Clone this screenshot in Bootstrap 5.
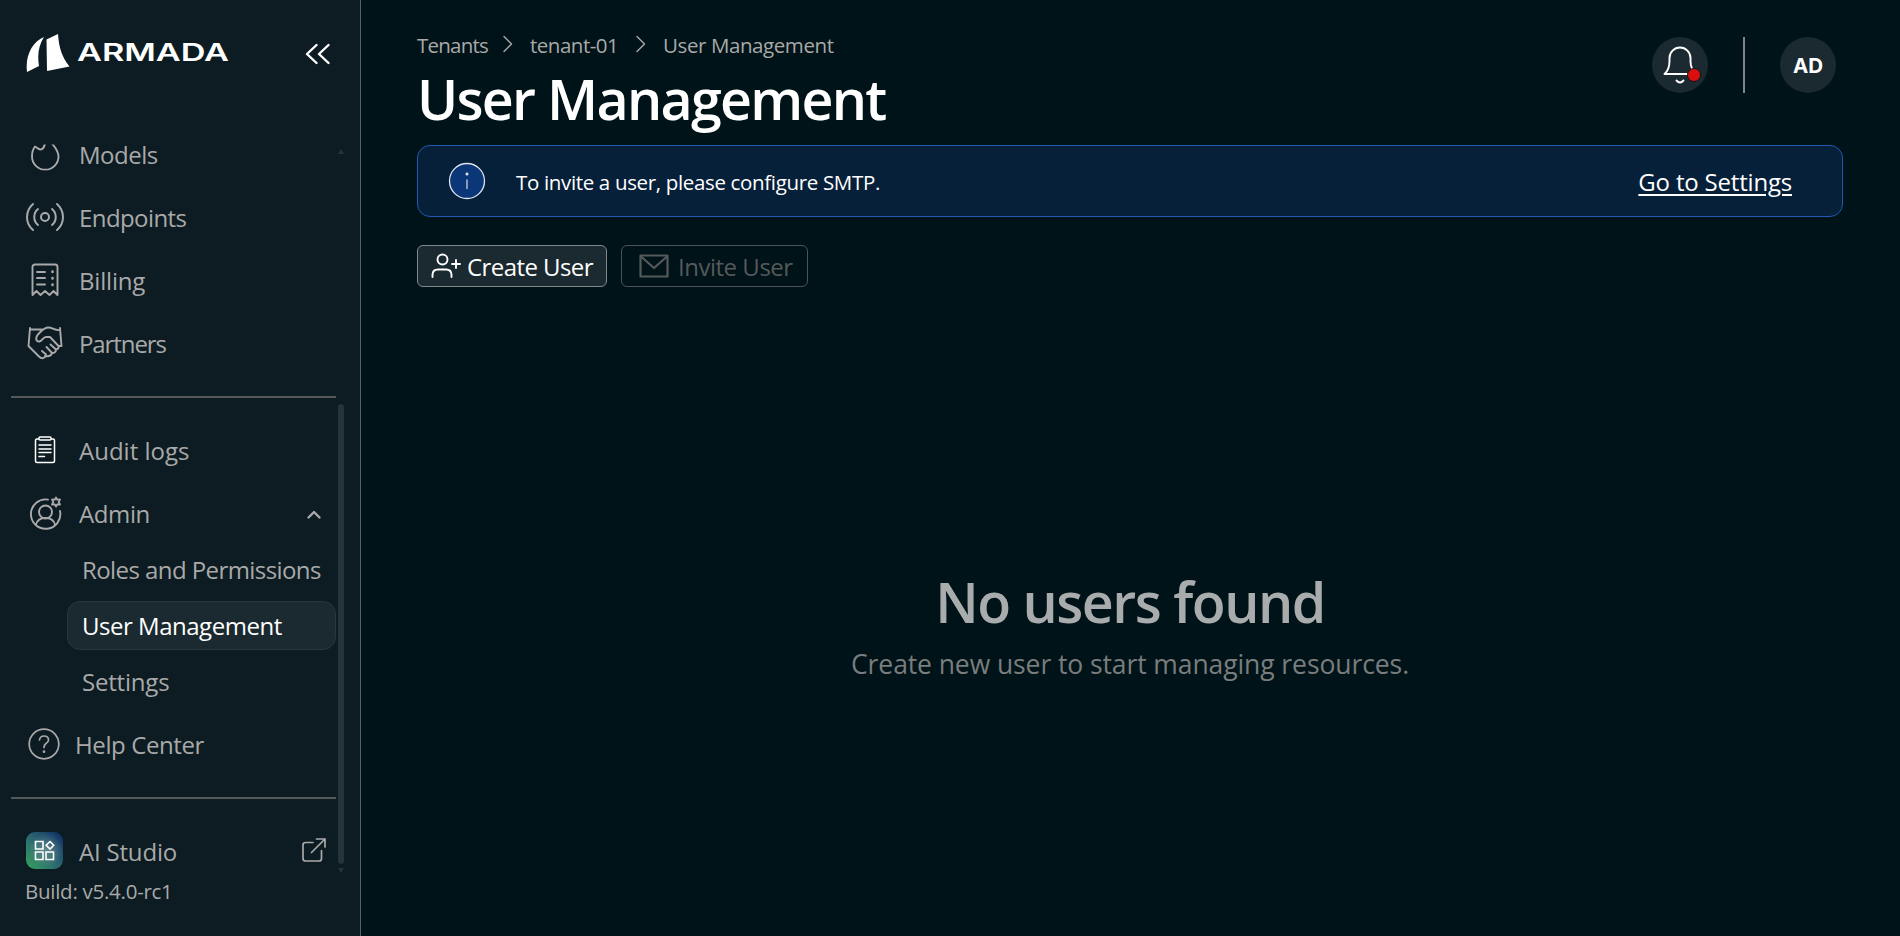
<!DOCTYPE html>
<html lang="en" data-bs-theme="dark">
<head>
<meta charset="utf-8">
<title>User Management</title>
<link href="https://cdn.jsdelivr.net/npm/bootstrap@5.3.0/dist/css/bootstrap.min.css" rel="stylesheet">
<script src="https://cdn.jsdelivr.net/npm/bootstrap@5.3.0/dist/js/bootstrap.bundle.min.js" defer></script>
<style>
body{background:#001318;color:#a9a9a9;font-family:"Open Sans","Noto Sans",sans-serif;font-size:24px;height:100vh;overflow:hidden}
svg{display:block;flex:none;fill:none;stroke:currentColor;stroke-linecap:round;stroke-linejoin:round}
.no-stroke{stroke:none}
.ls-1{letter-spacing:-.008em}.ls-2{letter-spacing:-.0165em}.ls-3{letter-spacing:-.02em}.ls-4{letter-spacing:-.024em}.ls-5{letter-spacing:-.038em}.ls-6{letter-spacing:-.045em}
.sidebar{width:361px;background:#0c1c22;border-right:1px solid #5c6163}
.brand-row{height:145px;padding:33px 30px 0 26px}
.collapse-ico{margin-top:8px}
.menu{width:336px;padding-left:11px}
.menu .nav{margin-top:-22px}
.menu a{color:inherit;text-decoration:none;white-space:nowrap}
.item{height:63px;padding-left:12px}
.item .ico{width:44px;margin-right:12px;padding-bottom:2px}
.item .ico-app{width:42px;margin-right:14px}
.scrolled-ico{clip-path:inset(8px 0 0 0)}
.rule{height:2px;background:#56595a;margin:21px 0}
.sub{margin:0 0 7px 56px;gap:7px}
.sub a{height:49px;line-height:48px;border:1px solid transparent;border-radius:13px;padding-left:14px}
.sub a.active{background:#1b2a30;border-color:#2b373c;color:#fff}
.help-ico{margin:-1px 15px 0 5px}
.build{font-size:20.5px;line-height:30px;padding-left:14px;margin-top:-7px;letter-spacing:-.013em}
.track{width:6px;margin-left:2px}
.thumb{width:6px;height:460px;background:#26343a;border-radius:3px;margin:250px 0 4px}
.tri{margin-top:4px;fill:#26343a;stroke:none}
main{padding:25px 57px 0 56px}
.crumbs{height:40px;font-size:20.5px}
.crumb-1{width:86px}.crumb-2{width:106px}
.crumbs svg{margin:-2px 17px 0 0}
.page-title{font-size:55.5px;font-weight:600;line-height:67px;color:#fff;margin:0 0 13px}
.page-title span{letter-spacing:-.031em}
.circle{width:56px;height:56px;background:#1b2a30}
.initials{font:700 20.5px Inter,sans-serif}
.tools{margin:12px 7px 0 0}
.vline{width:2px;height:56px;background:#818484;margin:0 35px}
.dot{left:35px;top:31px;width:14px;height:14px;background:#dc0f0f;border:1.5px solid #101416;border-radius:50%}
.notice{height:72px;background:#06203a;border:1px solid #2058b4;border-radius:13px;padding:0 50px 0 30px;color:#fff;margin:0}
.notice svg{color:#dfe5ee;margin-top:-1px}
.notice-text{font-size:20.5px;margin-left:30px;padding-top:2px}
.notice a{text-underline-offset:3px;text-decoration-thickness:2px;padding-top:2px}
.actions{margin-top:28px;gap:14px}
.tbtn{height:42px;border:1px solid #848889;border-radius:6px;padding:0;font-size:24px;line-height:40px;color:#fff;background:#1b2a30;white-space:nowrap}
.tbtn span{padding-top:2px}
.create{width:190px;padding-left:13px}.create svg{margin-right:6px}
.invite{width:187px;padding-left:17px}.invite svg{margin-right:9px}
.tbtn:disabled{background:transparent;color:#55595a;border-color:#4c5355;opacity:1}
.empty{margin-top:282px}
.empty-title{font-size:55.5px;font-weight:600;line-height:66px;color:#a9acac;letter-spacing:-.027em}
.empty-text{font-size:26.5px;color:#797d7d;line-height:40px;margin-top:9px;letter-spacing:-.0034em}
</style>
</head>
<body class="d-flex">
<aside class="sidebar d-flex flex-column flex-shrink-0">
  <div class="brand-row d-flex justify-content-between">
    <svg class="no-stroke" width="206" height="42" viewBox="0 0 206 42">
      <path fill="#fff" d="M1 39C-1 23 6 9 18 4C13 12 11 21 13 33ZM20.500 6.500L32 1C33 15 36 24 43.500 33.500L21 38Z"/>
      <text x="51" y="28" fill="#fff" font-family="Inter" font-weight="600" font-size="24" textLength="152" lengthAdjust="spacingAndGlyphs">ARMADA</text>
    </svg>
    <svg class="collapse-ico text-white" width="26" height="26" viewBox="0 0 26 26" stroke-width="2.4"><path d="M12.500 4L3 13L12.500 22M24.500 4L15 13L24.500 22"/></svg>
  </div>
  <div class="d-flex flex-grow-1">
    <nav class="menu">
      <div class="nav flex-column flex-nowrap">
        <a href="#" class="item d-flex align-items-center"><span class="ico d-flex justify-content-center"><svg class="scrolled-ico" width="32" height="34" viewBox="0 0 32 34" stroke-width="1.900"><path d="M17 1C16 8 15 12.500 11.500 12.500C9 12.500 8 10.500 6 9.500C4 12 3 15.500 3 19.500A13.200 13.200 0 0 0 29.500 19.500C29.500 14 26 9 18 1Z"/></svg></span><span class="ls-3">Models</span></a>
        <a href="#" class="item d-flex align-items-center"><span class="ico d-flex justify-content-center"><svg width="38" height="30" viewBox="0 0 38 30" stroke-width="2"><circle cx="19" cy="15" r="4"/><path d="M7 2C-1 9-1 21 7 28M31 2C39 9 39 21 31 28M12 7C7 11 7 19 12 23M26 7C31 11 31 19 26 23"/></svg></span><span class="ls-4">Endpoints</span></a>
        <a href="#" class="item d-flex align-items-center"><span class="ico d-flex justify-content-center"><svg width="28" height="34" viewBox="0 0 28 34" stroke-width="1.900"><path d="M1.500 32V4Q1.500 1.500 4 1.500H24Q26.500 1.500 26.500 4V32L22.500 28L18.500 32L14 28L9.500 32L5.500 28ZM6 9H14M6 15H14M6 21.500H14"/><path d="M21.500 8.500V9M21.500 15V15.500M21.500 21.500V22" stroke-width="2.600"/></svg></span><span class="ls-1">Billing</span></a>
        <a href="#" class="item d-flex align-items-center"><span class="ico d-flex justify-content-center"><svg width="36" height="34" viewBox="0 0 36 34" stroke-width="1.900"><path d="M3 2L1.500 20L12 30.500Q15 33.500 18 31L19 28.500M3 3.500H15M33 2L34.500 20H31.500M33 4C28 5 26 1.500 21 1.500C17 1.500 14 5 10.500 9C8 13 9.500 16 12.500 15.500C15 15 16 11 19 11H23L31.500 20Q32 23 29 23.500Q29 27 25 27Q24 31 18 30M15 25L19 28.500M19.500 21L25 27M23.500 18.500L29 23.500"/></svg></span><span class="ls-6">Partners</span></a>
        <div class="rule"></div>
        <a href="#" class="item d-flex align-items-center"><span class="ico d-flex justify-content-center"><svg class="text-white" width="22" height="28" viewBox="0 0 22 28" stroke-width="1.500"><rect x="1.500" y="3" width="19" height="23.500" rx="1.500"/><rect x="5" y="1" width="12" height="3" rx="1" fill="#0c1c22"/><path d="M5 9H17M5 13H17M5 16.500H17M5 20.500H10.500"/></svg></span><span>Audit logs</span></a>
        <a href="#" class="item d-flex align-items-center"><span class="ico d-flex justify-content-center"><svg width="34" height="34" viewBox="0 0 34 34" stroke-width="1.900"><path d="M20 3.600A14.700 14.700 0 1 0 32 15M8 29C9 19.500 26 19.500 27 29"/><circle cx="17.500" cy="16" r="6.500"/><path d="M28 1.500L29.200 3.700L32 3.500L30.700 6L32 8.500L29.200 8.300L28 10.500L26.800 8.300L24 8.500L25.300 6L24 3.500L26.800 3.700Z" stroke-width="1.800"/></svg></span><span class="ls-2">Admin</span><svg class="ms-auto" width="29" height="12" viewBox="1 0 29 12" stroke-width="2.400"><path d="M2.500 9.500L8 4L13.500 9.500"/></svg></a>
        <div class="sub d-flex flex-column">
          <a href="#"><span class="ls-4">Roles and Permissions</span></a>
          <a href="#" class="active"><span class="ls-3">User Management</span></a>
          <a href="#"><span class="ls-1">Settings</span></a>
        </div>
        <a href="#" class="item d-flex align-items-center"><svg class="help-ico" width="32" height="32" viewBox="0 0 32 32" stroke-width="1.700"><circle cx="16" cy="16" r="14.800"/><path d="M11.500 12Q12 8 16 8Q20.500 8 20.500 12Q20.500 14 18 15.500Q16 17 16 19.500"/><path d="M16 23.500V23.700" stroke-width="2.600"/></svg><span class="ls-2">Help Center</span></a>
        <div class="rule"></div>
        <a href="#" class="item d-flex align-items-center"><span class="ico ico-app d-flex justify-content-center"><svg class="text-white" width="37" height="37" viewBox="0 0 37 37" stroke-width="1.600"><defs><linearGradient id="g" x1="0" y1="1" x2="1" y2="0"><stop offset="0" stop-color="#36a35d"/><stop offset=".5" stop-color="#2b6570"/><stop offset="1" stop-color="#0d2c66"/></linearGradient><radialGradient id="h"><stop offset="0" stop-color="#8fa6a4" stop-opacity=".55"/><stop offset="1" stop-color="#8fa6a4" stop-opacity="0"/></radialGradient></defs><rect width="37" height="37" rx="9" fill="url(#g)" stroke="none"/><circle cx="20" cy="18" r="17" fill="url(#h)" stroke="none"/><path stroke-linejoin="miter" d="M9.500 9.500H17V17H9.500ZM9.500 20H17V27.500H9.500ZM20 20H27.500V27.500H20ZM24 9.500L27.700 13.200L24 17L20.200 13.200Z"/></svg></span><span class="ls-1">AI Studio</span><svg class="ms-auto mb-1" width="34" height="24" viewBox="0 0 34 24" stroke-width="1.700"><path d="M11 4.500H3.500Q1 4.500 1 7V20.500Q1 23 3.500 23H17Q19.500 23 19.500 20.500V12.500M9.500 14.500L23 1M14.500 1H23V9"/></svg></a>
        <div class="build">Build: v5.4.0-rc1</div>
      </div>
    </nav>
    <div class="track">
      <svg class="tri" width="6" height="5"><path d="M0 5L3 0L6 5Z"/></svg>
      <div class="thumb"></div>
      <svg class="tri" width="6" height="5"><path d="M0 0L3 5L6 0Z"/></svg>
    </div>
  </div>
</aside>
<main class="flex-grow-1 d-flex flex-column">
  <header class="d-flex justify-content-between align-items-start">
    <div>
      <div class="crumbs d-flex align-items-center">
        <span class="crumb-1 ls-5">Tenants</span>
        <svg width="10" height="18" viewBox="0 0 10 18" stroke-width="1.400"><path d="M1 1.500L8.500 9L1 16.500"/></svg>
        <span class="crumb-2 ls-4">tenant-01</span>
        <svg width="10" height="18" viewBox="0 0 10 18" stroke-width="1.400"><path d="M1 1.500L8.500 9L1 16.500"/></svg>
        <span class="ls-3">User Management</span>
      </div>
      <h1 class="page-title"><span>User Management</span></h1>
    </div>
    <div class="tools d-flex align-items-center">
      <div class="circle rounded-circle position-relative text-white">
        <svg width="56" height="56" viewBox="0 0 56 56" stroke-width="1.900"><path d="M12.500 37C16 34 17.500 30 17.500 24V21A10.500 10.500 0 0 1 38.500 21V24C38.500 27 39 29.500 40 31.500M12.500 37H36M24.500 43.500Q28 47.500 31.500 43.500"/></svg>
        <span class="dot position-absolute"></span>
      </div>
      <div class="vline"></div>
      <div class="circle initials rounded-circle d-flex align-items-center justify-content-center text-white">AD</div>
    </div>
  </header>
  <div class="notice alert d-flex align-items-center flex-shrink-0">
    <svg width="38" height="38" viewBox="0 0 38 38" stroke-width="1.300"><circle cx="19" cy="19" r="17.500" fill="#0b3677"/><path d="M19 18V26.500" stroke="#a9b4c8" stroke-width="1.600"/><path d="M19 12V12.200" stroke-width="2.800"/></svg>
    <span class="notice-text ls-2">To invite a user, please configure SMTP.</span>
    <a href="#" class="ms-auto text-white ls-1">Go to Settings</a>
  </div>
  <div class="actions d-flex">
    <button class="btn tbtn create d-flex align-items-center"><svg width="30" height="26" viewBox="0 0 30 26" stroke-width="1.900"><circle cx="11.500" cy="6.500" r="5"/><path d="M1.500 24V22Q1.500 16.500 7 16.500H15Q20.500 16.500 20.500 22V24M25 7V15M21 11H29"/></svg><span class="ls-4">Create User</span></button>
    <button class="btn tbtn invite d-flex align-items-center" disabled><svg width="30" height="24" viewBox="0 0 30 24" stroke-width="2.200"><rect x="1.500" y="1.500" width="27" height="21"/><path d="M2 2.500L15 14L28 2.500"/></svg><span class="ls-3">Invite User</span></button>
  </div>
  <div class="empty text-center">
    <div class="empty-title">No users found</div>
    <div class="empty-text">Create new user to start managing resources.</div>
  </div>
</main>
</body>
</html>
